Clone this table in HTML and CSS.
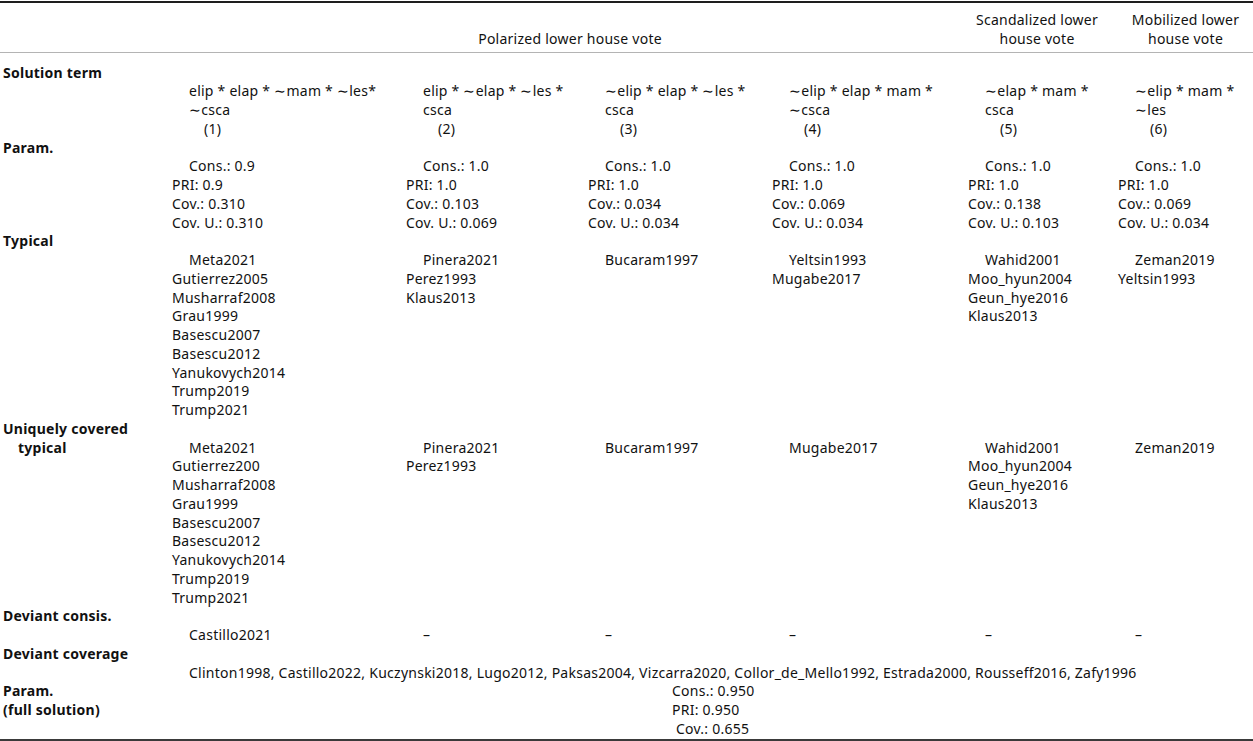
FILE: index.html
```html
<!DOCTYPE html>
<html lang="en">
<head>
<meta charset="utf-8">
<title>QCA solution table</title>
<link rel="stylesheet" href="styles.css">
</head>
<body>
<table class="qca">
  <colgroup>
    <col class="c-label">
    <col class="c1">
    <col class="c2">
    <col class="c3">
    <col class="c4">
    <col class="c5">
    <col class="c6">
  </colgroup>
  <thead>
    <tr>
      <th class="h-empty"></th>
      <th class="h-group" colspan="4">Polarized lower house vote</th>
      <th class="h-group h-scan">Scandalized lower<br>house vote</th>
      <th class="h-group">Mobilized lower<br>house vote</th>
    </tr>
  </thead>
  <tbody>
    <tr class="first-row">
      <td class="label">Solution term</td>
      <td class="term">elip * elap * ∼mam * ∼les*<br>∼csca<span class="num">(1)</span></td>
      <td class="term">elip * ∼elap * ∼les *<br>csca<span class="num">(2)</span></td>
      <td class="term">∼elip * elap * ∼les *<br>csca<span class="num">(3)</span></td>
      <td class="term">∼elip * elap * mam *<br>∼csca<span class="num">(4)</span></td>
      <td class="term">∼elap * mam *<br>csca<span class="num">(5)</span></td>
      <td class="term">∼elip * mam *<br>∼les<span class="num">(6)</span></td>
    </tr>
    <tr>
      <td class="label">Param.</td>
      <td class="data">Cons.: 0.9<br>PRI: 0.9<br>Cov.: 0.310<br>Cov. U.: 0.310</td>
      <td class="data">Cons.: 1.0<br>PRI: 1.0<br>Cov.: 0.103<br>Cov. U.: 0.069</td>
      <td class="data">Cons.: 1.0<br>PRI: 1.0<br>Cov.: 0.034<br>Cov. U.: 0.034</td>
      <td class="data">Cons.: 1.0<br>PRI: 1.0<br>Cov.: 0.069<br>Cov. U.: 0.034</td>
      <td class="data">Cons.: 1.0<br>PRI: 1.0<br>Cov.: 0.138<br>Cov. U.: 0.103</td>
      <td class="data">Cons.: 1.0<br>PRI: 1.0<br>Cov.: 0.069<br>Cov. U.: 0.034</td>
    </tr>
    <tr>
      <td class="label">Typical</td>
      <td class="data">Meta2021<br>Gutierrez2005<br>Musharraf2008<br>Grau1999<br>Basescu2007<br>Basescu2012<br>Yanukovych2014<br>Trump2019<br>Trump2021</td>
      <td class="data">Pinera2021<br>Perez1993<br>Klaus2013</td>
      <td class="data">Bucaram1997</td>
      <td class="data">Yeltsin1993<br>Mugabe2017</td>
      <td class="data">Wahid2001<br>Moo_hyun2004<br>Geun_hye2016<br>Klaus2013</td>
      <td class="data">Zeman2019<br>Yeltsin1993</td>
    </tr>
    <tr>
      <td class="label">Uniquely covered<br><span class="hang">typical</span></td>
      <td class="data">Meta2021<br>Gutierrez200<br>Musharraf2008<br>Grau1999<br>Basescu2007<br>Basescu2012<br>Yanukovych2014<br>Trump2019<br>Trump2021</td>
      <td class="data">Pinera2021<br>Perez1993</td>
      <td class="data">Bucaram1997</td>
      <td class="data">Mugabe2017</td>
      <td class="data">Wahid2001<br>Moo_hyun2004<br>Geun_hye2016<br>Klaus2013</td>
      <td class="data">Zeman2019</td>
    </tr>
    <tr>
      <td class="label">Deviant consis.</td>
      <td class="data">Castillo2021</td>
      <td class="data">–</td>
      <td class="data">–</td>
      <td class="data">–</td>
      <td class="data">–</td>
      <td class="data">–</td>
    </tr>
    <tr>
      <td class="label">Deviant coverage</td>
      <td class="data wide" colspan="6">Clinton1998, Castillo2022, Kuczynski2018, Lugo2012, Paksas2004, Vizcarra2020, Collor_de_Mello1992, Estrada2000, Rousseff2016, Zafy1996</td>
    </tr>
    <tr class="last-row">
      <td class="label">Param.<br>(full solution)</td>
      <td class="full" colspan="6">Cons.: 0.950<br>PRI: 0.950<br><span class="nudge">Cov.: 0.655</span></td>
    </tr>
  </tbody>
</table>
</body>
</html>
```

FILE: styles.css
```css
:root {
  --lh: 18.75px;
}

html, body {
  margin: 0;
  padding: 0;
  background: #ffffff;
}

body {
  font-family: "Noto Sans", "Open Sans", sans-serif;
  font-size: 14px;
  line-height: var(--lh);
  letter-spacing: 0.25px;
  color: #111111;
}

.qca {
  width: 1253px;
  table-layout: fixed;
  border-collapse: collapse;
  margin-top: 1px;
  border-top: 2px solid #1e1e1e;
  border-bottom: 2px solid #3a3a3a;
}

.c-label { width: 172px; }
.c1 { width: 234px; }
.c2 { width: 182px; }
.c3 { width: 184px; }
.c4 { width: 196px; }
.c5 { width: 150px; }
.c6 { width: 135px; }

.qca th,
.qca td {
  padding: 0;
  vertical-align: top;
  text-align: left;
  white-space: nowrap;
}

.qca thead th {
  font-weight: normal;
  text-align: center;
  vertical-align: bottom;
  padding: 8px 0 3px 0;
  border-bottom: 1px solid #b4b4b4;
}

.qca thead .h-scan {
  padding-right: 12px;
}

.qca .first-row td {
  padding-top: 11px;
}

.qca td.label {
  font-weight: bold;
  padding-left: 3px;
  white-space: nowrap;
}

.hang {
  padding-left: 15px;
}

.qca td.data {
  padding-top: var(--lh);
  text-indent: 17px;
}

.qca .first-row td.term {
  padding-top: calc(var(--lh) + 11px);
  padding-left: 17px;
}

.num {
  display: block;
  padding-left: 15px;
}

.qca td.wide {
  padding-left: 0;
}

.qca td.full {
  padding-left: 500px;
}

.nudge {
  padding-left: 4px;
}
```
